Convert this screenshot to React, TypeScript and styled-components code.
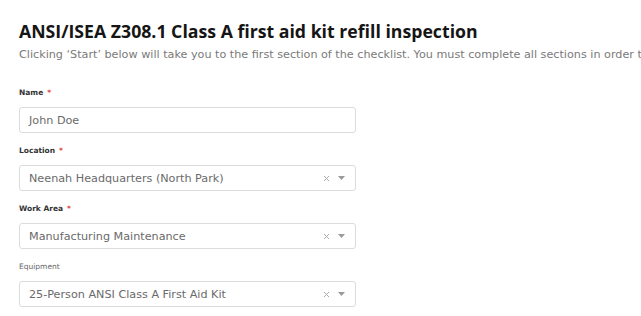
import React from "react";
import styled, { createGlobalStyle } from "styled-components";

const Global = createGlobalStyle`
  html, body { margin: 0; padding: 0; background: #fff; }
  body { font-family: "DejaVu Sans", "Open Sans", sans-serif; overflow: hidden; }
`;

const Page = styled.div`
  width: 641px;
  height: 316px;
  overflow: hidden;
  padding: 19px 0 0 19px;
  box-sizing: border-box;
`;

const Title = styled.h1`
  margin: 0;
  font-family: "Open Sans", "DejaVu Sans", sans-serif;
  font-size: 17.7px;
  line-height: 24px;
  font-weight: 700;
  color: #151515;
  white-space: nowrap;
`;

const Subtitle = styled.p`
  margin: 5px 0 0;
  font-size: 11.2px;
  line-height: 14px;
  color: #7a7a7a;
  white-space: nowrap;
`;

const Form = styled.div`
  margin-top: 26px;
  display: flex;
  flex-direction: column;
  width: 337px;
`;

const Field = styled.div`
  display: flex;
  flex-direction: column;
  margin-bottom: 13px;
`;

const Label = styled.label<{ $bold?: boolean }>`
  font-size: 7.5px;
  line-height: 10px;
  font-weight: ${(p) => (p.$bold ? 700 : 400)};
  color: ${(p) => (p.$bold ? "#333" : "#666")};
  margin-bottom: 9px;
`;

const Star = styled.span`
  color: #e0403a;
  margin-left: 4px;
`;

const Box = styled.div`
  height: 26px;
  box-sizing: border-box;
  border: 1px solid #dcdcdc;
  border-radius: 3px;
  display: flex;
  align-items: center;
  padding: 0 10px 0 9px;
  font-size: 11.2px;
  color: #6a6a6a;
`;

const Value = styled.span`
  flex: 1;
  white-space: nowrap;
`;

const Icons = styled.span`
  display: flex;
  align-items: center;
  gap: 8px;
`;

function FormField({ label, value, required, select, bold = true }: { label: string; value: string; required?: boolean; select?: boolean; bold?: boolean }) {
  return (
    <Field>
      <Label $bold={bold}>
        {label}
        {required && <Star>*</Star>}
      </Label>
      <Box>
        <Value>{value}</Value>
        {select && (
          <Icons>
            <svg width="7" height="7" viewBox="0 0 7 7">
              <path d="M1 1L6 6M6 1L1 6" stroke="#aaa" strokeWidth="1" />
            </svg>
            <svg width="7" height="4" viewBox="0 0 7 4">
              <path d="M0 0H7L3.5 4Z" fill="#999" />
            </svg>
          </Icons>
        )}
      </Box>
    </Field>
  );
}

export default function App() {
  return (
    <>
      <Global />
      <Page>
        <Title>ANSI/ISEA Z308.1 Class A first aid kit refill inspection</Title>
        <Subtitle>
          Clicking ‘Start’ below will take you to the first section of the checklist. You must complete all sections in order to submit.
        </Subtitle>
        <Form>
          <FormField label="Name" value="John Doe" required />
          <FormField label="Location" value="Neenah Headquarters (North Park)" required select />
          <FormField label="Work Area" value="Manufacturing Maintenance" required select />
          <FormField label="Equipment" value="25-Person ANSI Class A First Aid Kit" select bold={false} />
        </Form>
      </Page>
    </>
  );
}
